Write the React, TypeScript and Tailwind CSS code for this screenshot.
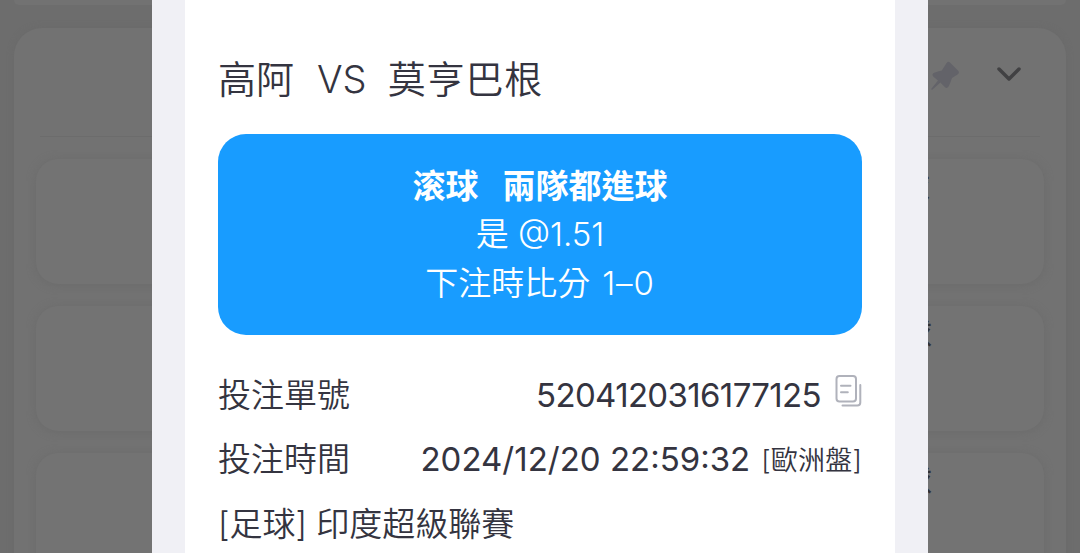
import React from "react";

const details = [
  { label: "投注單號", value: "5204120316177125", copy: true },
  { label: "投注時間", value: "2024/12/20 22:59:32", note: "[歐洲盤]" },
];

function CopyIcon() {
  return (
    <svg width="27" height="32" viewBox="0 0 27 32" fill="none" stroke="#b0b2bb" strokeWidth="2" strokeLinecap="round" strokeLinejoin="round">
      <rect x="1.5" y="1" width="19.5" height="25.5" rx="3" />
      <path d="M6 10.7h9.5M6 17.2h6.8M7.5 30.5h14.8a3 3 0 0 0 3-3V10" />
    </svg>
  );
}

function PinIcon() {
  return (
    <svg width="30" height="30" viewBox="0 0 30 30" fill="#636369">
      <path d="M19.6 1.2 28.6 10.2Q29.8 12 27.6 13.4L22 17Q20.8 21 18.6 25.6Q16.8 28 14.8 26L10.4 21.6 2 28.9 1.2 28.1 8 19.4 3.2 15.4Q1.4 13.2 4.2 11.8 8 10.3 11.8 9.6L16.4 2.2Q18 .2 19.6 1.2Z" />
    </svg>
  );
}

function BackgroundPage() {
  return (
    <div className="h-full overflow-hidden bg-[#6d6d6d] px-3.5">
      <div className="h-[5px] rounded-b-[24px] bg-[#727272]" />
      <div className="mt-[23px] h-[620px] rounded-[28px] bg-[#727272] px-[22px] shadow-[0_0_6px_#6a6a6a]">
        <div className="mx-1 flex h-[109px] items-center justify-end gap-9 border-b border-[#6c6c6c] pr-[18px] pb-3">
          <PinIcon />
          <svg className="-mt-1" width="26" height="16" viewBox="0 0 26 16" fill="none" stroke="#414143" strokeWidth="3.5" strokeLinecap="round" strokeLinejoin="round">
            <path d="M3 3l10 10L23 3" />
          </svg>
        </div>
        <div className="mt-[22px] flex flex-col gap-[22px]">
          {["pr-[114px]", "pr-[112px]", "pr-[112px]"].map((inset, index) => (
            <div
              key={index}
              className={`flex h-[125px] shrink-0 justify-end rounded-[22px] bg-[#737373] pt-1 text-[33px] leading-[48px] text-[#303034] shadow-[0_1px_9px_#6b6b6b] ${inset}`}
            >
              球
            </div>
          ))}
        </div>
      </div>
    </div>
  );
}

export default function App() {
  return (
    <main className="relative h-[553px] w-[1080px] overflow-hidden font-['Inter','Noto_Sans_CJK_TC',sans-serif]">
      <BackgroundPage />

      {/* Bet slip dialog */}
      <div className="absolute inset-y-0 left-[152px] w-[776px] bg-[#f0f0f5] px-[33px]">
        <section className="h-full bg-white px-[33px] pt-[51px] text-[33px] font-[350] text-[#343440]">
          <h1 className="flex h-[56px] items-center gap-[23px] text-[38px] whitespace-nowrap">
            <span>高阿</span>
            <span>VS</span>
            <span className="-ml-0.5 tracking-[0.9px]">莫亨巴根</span>
          </h1>

          <div className="mt-[27px] flex h-[200.5px] flex-col items-center justify-center rounded-[28px] bg-[#189cff] leading-[48.5px] text-white">
            <p className="flex gap-6 font-bold">
              <span>滚球</span>
              <span>兩隊都進球</span>
            </p>
            <p>是 @1.51</p>
            <p className="flex gap-3">
              <span>下注時比分</span>
              <span className="tracking-[0.9px]">1–0</span>
            </p>
          </div>

          <dl className="mt-[28.5px]">
            {details.map(({ label, value, copy, note }) => (
              <div key={label} className="flex h-[64.5px] items-center justify-between whitespace-nowrap">
                <dt>{label}</dt>
                <dd className="flex items-center">
                  <span className={copy ? "font-normal tracking-[-0.65px]" : "font-normal"}>{value}</span>
                  {copy && <span className="-mt-2 ml-3.5"><CopyIcon /></span>}
                  {note && <span className="mt-0.5 ml-[11px] text-[27px] tracking-[0.2px]">{note}</span>}
                </dd>
              </div>
            ))}
          </dl>
          <p className="leading-[64.5px]">[足球] 印度超級聯賽</p>
        </section>
      </div>
    </main>
  );
}
